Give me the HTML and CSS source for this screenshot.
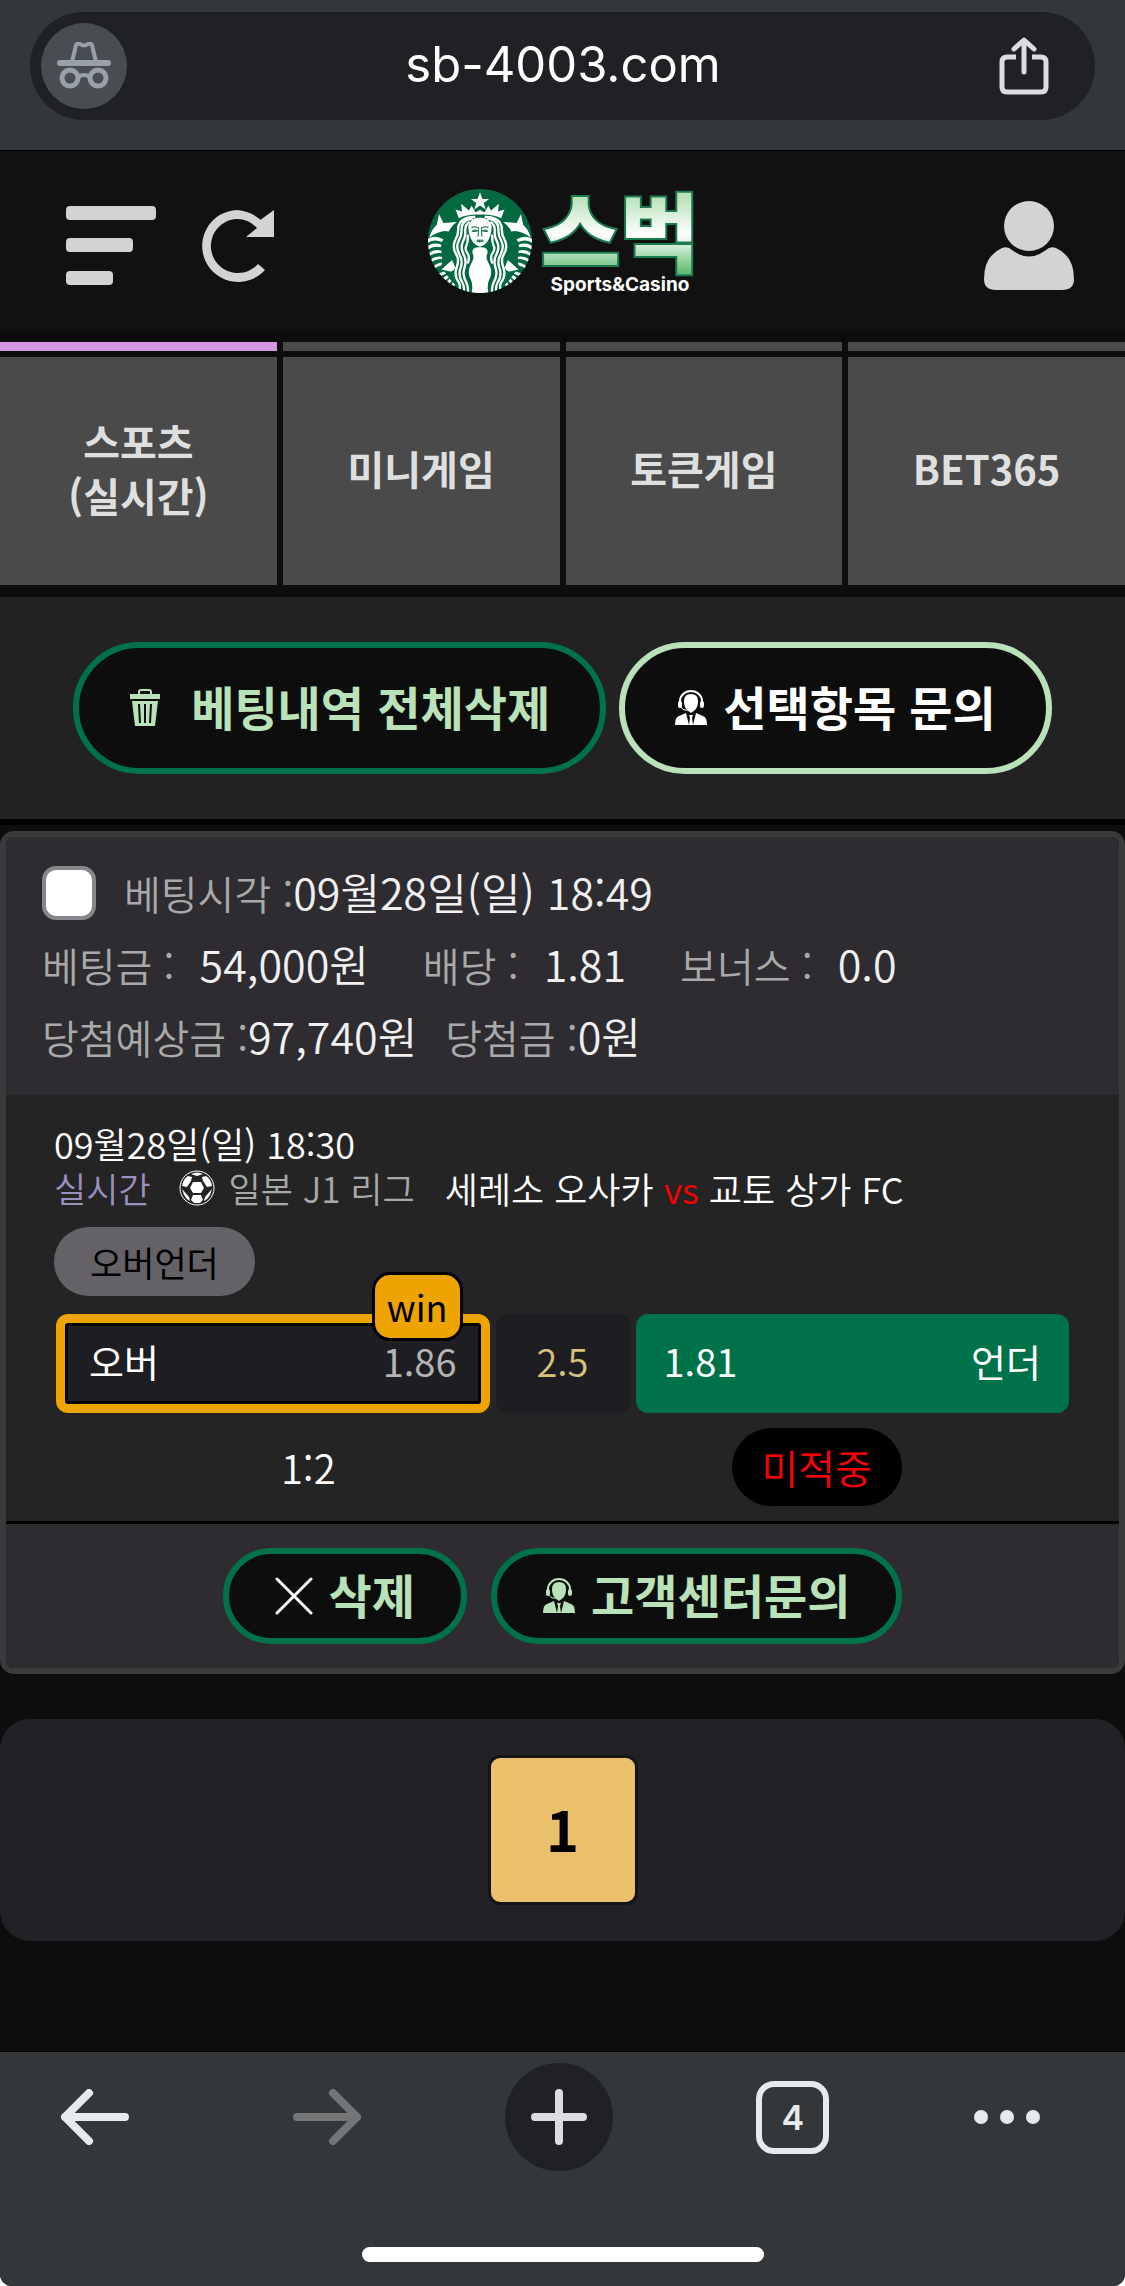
FILE: index.html
```html
<!DOCTYPE html>
<html lang="ko">

<head>
    <meta charset="UTF-8">
    <meta name="viewport" content="width=device-width, initial-scale=1.0">
    <title>스벅 - 베팅내역</title>
    <link rel="stylesheet" href="styles.css">
</head>

<body>
    <!-- shared icons -->
    <svg class="sprite" aria-hidden="true">
        <symbol id="icon-agent" viewBox="0 0 32 36">
            <path d="M5 15v-4a11 10 0 0 1 22 0v4" fill="none" stroke="currentColor" stroke-width="2" />
            <rect x="3" y="11" width="4" height="7" rx="2" />
            <rect x="25" y="11" width="4" height="7" rx="2" />
            <path d="M9 11q0-7 7-7t7 7q0 6-3 9l-4 3-4-3q-3-3-3-9z" />
            <path d="M6 17q2 4 8 3" fill="none" stroke="currentColor" stroke-width="1" />
            <path d="M0 35q0-8 4-9l7-3 3 12zM32 35q0-8-4-9l-7-3-3 12zM14 25h4l-1 3 1 7h-4l1-7z" />
        </symbol>
    </svg>

    <div class="screen">
        <div class="browser-top">
            <div class="address-bar">
                <span class="incognito">
                    <svg viewBox="0 0 54 48" width="54" height="48">
                        <path d="M15 20L19 3Q20 1 23 2Q27 5 31 2Q34 1 35 3L39 20" fill="none" stroke="currentColor" stroke-width="4" />
                        <rect x="0" y="18" width="54" height="6" rx="3" />
                        <circle cx="13" cy="36" r="8" fill="none" stroke="currentColor" stroke-width="5" />
                        <circle cx="41" cy="36" r="8" fill="none" stroke="currentColor" stroke-width="5" />
                        <path d="M21 35Q27 31 33 35" fill="none" stroke="currentColor" stroke-width="4" />
                    </svg>
                </span>
                <input class="url" type="text" value="sb-4003.com" aria-label="주소">
                <button class="icon-button share" aria-label="공유">
                    <svg viewBox="0 0 50 58" width="50" height="58" class="stroke-icon thin">
                        <path d="M17 20H8Q3 20 3 25V50Q3 55 8 55H42Q47 55 47 50V25Q47 20 42 20H33" stroke-linecap="butt" />
                        <path d="M25 35V4M15 12L25 3L35 12" />
                    </svg>
                </button>
            </div>
        </div>

        <header class="site-header">
            <div class="header-left">
                <button class="icon-button" aria-label="메뉴">
                    <svg viewBox="0 0 90 80" width="90" height="80">
                        <rect x="0" y="0" width="90" height="14" rx="4" />
                        <rect x="0" y="32" width="67" height="14" rx="4" />
                        <rect x="0" y="65" width="47" height="14" rx="4" />
                    </svg>
                </button>
                <button class="icon-button" aria-label="새로고침">
                    <svg viewBox="0 0 74 72" width="74" height="72">
                        <path d="M55 13L73 0V27H45L56 18Q48 9 36 9A27 27 0 1 0 57 54L64 60A36 36 0 1 1 36 0Q50 1 61 11Z" />
                    </svg>
                </button>
            </div>

            <a class="logo" href="#" aria-label="스벅 Sports&amp;Casino">
                <svg class="logo-mark" viewBox="0 0 310 310" width="104" height="104">
                    <clipPath id="logo-clip"><circle cx="155" cy="155" r="155" /></clipPath>
                    <circle cx="155" cy="155" r="155" fill="#04693e" />
                    <g clip-path="url(#logo-clip)">
                        <path d="M155 10L162 30H182L166 42L172 61L155 49L138 61L144 42L128 30H148Z" fill="#fff" />
                        <g id="siren-half">
                            <path d="M155 62L142 70L130 50L122 64L99 44L101 67L82 61L92 87Q118 74 155 76Z" fill="#fff" />
                            <path d="M155 86Q127 84 120 112L122 132Q132 168 155 172Z" fill="#fff" />
                            <path d="M33 75L46 101L86 98Q68 110 62 127Q38 120 4 145Q10 120 26 107Z" fill="#fff" />
                            <path d="M0 148Q22 136 46 150L42 158Q18 148 0 160ZM0 169Q20 158 40 166L38 174Q18 168 0 180ZM4 190Q20 178 40 184L40 191Q20 188 4 200ZM8 211Q22 199 42 202L42 209Q24 208 8 220ZM15 232Q26 220 42 219L40 227Q26 230 16 242Z" fill="#fff" />
                            <path d="M40 240L72 212L82 236Q72 246 66 246L44 241ZM24 254L48 246L54 252L30 264ZM36 272L56 257L62 263L44 280ZM48 288L64 267L70 274L56 292ZM64 298L74 278L80 285L74 304Z" fill="#fff" />
                            <g fill="none" stroke="#fff" stroke-width="7">
                                <path d="M141 83Q96 82 90 115Q92 135 80 155Q72 175 84 195Q94 210 86 232Q76 258 92 278Q98 290 92 306" />
                                <path d="M134 88Q102 90 100 118Q102 136 91 156Q82 174 94 196Q104 213 98 232Q88 256 102 278Q110 292 106 308" />
                                <path d="M124 98Q110 106 111 126Q113 142 103 160Q96 176 106 195Q116 212 109 234Q101 254 113 276Q122 294 118 310" />
                                <path d="M118 136Q120 156 115 167Q108 180 118 192Q126 204 118 222" />
                            </g>
                            <path d="M156 174Q132 172 132 190Q140 204 130 220Q116 242 125 264Q136 284 130 310H156Z" fill="#fff" />
                            <path d="M130 116Q138 109 148 116M132 125Q140 119 147 125Q140 129 132 125M150 114V138L148 142M145 154Q150 150 156 153V157Q150 159 145 154" fill="none" stroke="#04693e" stroke-width="3" />
                        </g>
                        <use href="#siren-half" transform="translate(310 0) scale(-1 1)" />
                    </g>
                </svg>
                <svg class="logo-text" viewBox="0 0 164 104" width="164" height="104">
                    <defs>
                        <linearGradient id="logo-fill" x1="0" y1="0" x2="0" y2="1">
                            <stop offset="25%" stop-color="#b9e2b8" />
                            <stop offset="55%" stop-color="#ffffff" />
                            <stop offset="85%" stop-color="#62bd72" />
                        </linearGradient>
                    </defs>
                    <text class="logo-name" x="82" y="77" text-anchor="middle">스벅</text>
                    <text class="logo-sub" x="82" y="102" text-anchor="middle">Sports&amp;Casino</text>
                </svg>
            </a>

            <button class="icon-button" aria-label="내 정보">
                <svg viewBox="0 0 90 90" width="90" height="90">
                    <circle cx="45" cy="25" r="25" />
                    <path d="M18 47Q24 45 28 49Q45 62 62 49Q66 45 72 47Q90 55 90 78Q90 89 78 89H12Q0 89 0 78Q0 55 18 47Z" />
                </svg>
            </button>
        </header>

        <nav class="tabs">
            <a class="tab active" href="#"><span>스포츠<br>(실시간)</span></a>
            <a class="tab" href="#"><span>미니게임</span></a>
            <a class="tab" href="#"><span>토큰게임</span></a>
            <a class="tab" href="#"><span>BET365</span></a>
        </nav>

        <div class="actions">
            <button class="pill-button large wide-gap">
                <svg viewBox="0 0 32 38" width="32" height="38">
                    <path d="M10 5V3Q10 1 12 1H20Q22 1 22 3V5" fill="none" stroke="currentColor" stroke-width="2" />
                    <path d="M1 5H31V10H1ZM3 12H29L26 37H6Z" />
                    <path d="M10 15L11 34M16 15V34M22 15L21 34" stroke="#0d0d0d" stroke-width="2" />
                </svg>
                <span>베팅내역 전체삭제</span>
            </button>
            <button class="pill-button large light">
                <svg width="32" height="36"><use href="#icon-agent" /></svg>
                <span>선택항목 문의</span>
            </button>
        </div>

        <main>
            <section class="bet-card">
                <div class="bet-info">
                    <div class="info-row">
                        <input type="checkbox" id="bet1" class="bet-check">
                        <label for="bet1">베팅시각 :<b>09월28일(일) 18:49</b></label>
                    </div>
                    <div class="info-row spaced">
                        <span>베팅금 : <b>54,000원</b></span>
                        <span>배당 : <b>1.81</b></span>
                        <span>보너스 : <b>0.0</b></span>
                    </div>
                    <div class="info-row">
                        <span>당첨예상금 :<b>97,740원</b></span>
                        <span>당첨금 :<b>0원</b></span>
                    </div>
                </div>

                <div class="match">
                    <div class="match-date">09월28일(일) 18:30</div>
                    <div class="match-title">
                        <span class="live">실시간</span>
                        <svg viewBox="0 0 36 36" width="36" height="36">
                            <circle cx="18" cy="18" r="17" fill="#242424" stroke="#fff" stroke-width="1" />
                            <g fill="#fff">
                                <path d="M14 12H22L25 18L22 23H14L11 18Z" />
                                <path d="M12 11L8 17L3 16Q4 9 9 6L13 7ZM24 11L28 17L33 16Q32 9 27 6L23 7Z" />
                                <path d="M14 25H22L24 30L21 33H15L12 30Z" />
                                <path d="M3 19L5 25Q7 29 11 31L10 27ZM33 19L31 25Q29 29 25 31L26 27ZM12 4Q18 1 24 4L18 6Z" />
                            </g>
                        </svg>
                        <span class="league">일본 J1 리그</span>
                        <span class="teams">세레소 오사카 <em>vs</em> 교토 상가 FC</span>
                    </div>
                    <span class="market">오버언더</span>

                    <div class="odds">
                        <button class="odd win">
                            <span>오버</span><span class="rate">1.86</span>
                            <span class="win-badge">win</span>
                        </button>
                        <div class="line">2.5</div>
                        <button class="odd picked">
                            <span>1.81</span><span>언더</span>
                        </button>
                    </div>

                    <div class="result">
                        <span>1:2</span>
                        <span class="miss">미적중</span>
                    </div>
                </div>

                <div class="bet-footer">
                    <button class="pill-button">
                        <svg viewBox="0 0 38 38" width="38" height="38">
                            <path d="M2 2L36 36M36 2L2 36" stroke="#fff" stroke-width="3" stroke-linecap="round" />
                        </svg>
                        <span>삭제</span>
                    </button>
                    <button class="pill-button">
                        <svg width="32" height="36"><use href="#icon-agent" /></svg>
                        <span>고객센터문의</span>
                    </button>
                </div>
            </section>

            <div class="pagination">
                <button class="page current">1</button>
            </div>
        </main>

        <footer class="browser-bottom">
            <div class="toolbar">
                <button class="icon-button" aria-label="뒤로">
                    <svg viewBox="0 0 68 56" width="68" height="56" class="stroke-icon"><path d="M64 28H4M28 4L4 28L28 52" /></svg>
                </button>
                <button class="icon-button forward" aria-label="앞으로" disabled>
                    <svg viewBox="0 0 68 56" width="68" height="56" class="stroke-icon"><path d="M4 28H64M40 4L64 28L40 52" /></svg>
                </button>
                <button class="icon-button new-tab" aria-label="새 탭">
                    <svg viewBox="0 0 56 56" width="56" height="56" class="stroke-icon"><path d="M28 4V52M4 28H52" /></svg>
                </button>
                <button class="icon-button tab-count" aria-label="탭 4개">4</button>
                <button class="icon-button" aria-label="더보기">
                    <svg viewBox="0 0 68 16" width="68" height="16">
                        <circle cx="8" cy="8" r="7" />
                        <circle cx="34" cy="8" r="7" />
                        <circle cx="60" cy="8" r="7" />
                    </svg>
                </button>
            </div>
            <div class="home-indicator"></div>
        </footer>
    </div>
</body>

</html>
```

FILE: styles.css
```css
/* Global styles */
* {
    box-sizing: border-box;
    margin: 0;
    padding: 0;
}

html {
    background-color: white;
}

body {
    font-family: "Noto Sans CJK KR", sans-serif;
    font-size: 40px;
    font-weight: 350;
    color: white;
}

button,
input {
    font-family: inherit;
    font-size: inherit;
    font-weight: inherit;
    color: inherit;
}

button {
    cursor: pointer;
}

a {
    color: inherit;
    text-decoration: none;
}

svg {
    display: block;
    flex: none;
    fill: currentColor;
}

.sprite {
    position: absolute;
    width: 0;
    height: 0;
}

.screen {
    display: flex;
    flex-direction: column;
    min-height: 100vh;
    background-color: #0d0d0d;
    border-radius: 0 0 12px 12px;
    overflow: hidden;
}

.icon-button {
    display: flex;
    align-items: center;
    justify-content: center;
    background: none;
    border: none;
}

.stroke-icon {
    fill: none;
    stroke: currentColor;
    stroke-width: 8px;
    stroke-linecap: round;
    stroke-linejoin: round;
}

.stroke-icon.thin {
    stroke-width: 5px;
}

/* Browser address bar */
.browser-top {
    padding: 12px 30px 30px;
    background-color: #33373a;
    border-bottom: 1px solid black;
}

.address-bar {
    display: flex;
    align-items: center;
    justify-content: space-between;
    height: 108px;
    padding: 0 46px 0 11px;
    background-color: #202125;
    border-radius: 54px;
}

.incognito {
    display: flex;
    align-items: center;
    justify-content: center;
    width: 86px;
    height: 86px;
    border-radius: 50%;
    background-color: #474d50;
    color: #9aa0a9;
}

.url {
    flex: 1;
    min-width: 0;
    padding-bottom: 4px;
    background: none;
    border: none;
    outline: none;
    text-align: center;
    font-family: Inter, "Liberation Sans", sans-serif;
    font-size: 49px;
    font-weight: 400;
}

.share {
    color: #dcdde2;
}

/* Site header */
.site-header {
    display: flex;
    align-items: center;
    justify-content: space-between;
    height: 179px;
    padding: 10px 51px 0 66px;
    background-color: #111111;
    color: #d3d3d3;
}

.header-left {
    display: flex;
    align-items: center;
    gap: 45px;
}

.logo {
    display: flex;
    align-items: center;
    margin: 0 130px 10px 0;
}

.logo-text {
    margin-left: 6px;
    overflow: visible;
}

.logo-name {
    font-size: 86px;
    font-weight: 900;
    fill: url(#logo-fill);
    stroke: #1b7a50;
    stroke-width: 4px;
    paint-order: stroke;
}

.logo-sub {
    font-family: Inter, sans-serif;
    font-size: 19px;
    font-weight: 700;
    fill: white;
}

/* Category tabs */
.tabs {
    display: grid;
    grid-template-columns: repeat(4, 1fr);
    gap: 6px;
    padding: 12px 0;
}

.tab {
    display: flex;
    flex-direction: column;
    gap: 6px;
    color: #dfdfdf;
    font-weight: 700;
    line-height: 54px;
    text-align: center;
}

.tab::before {
    content: "";
    height: 9px;
    background-color: #4a4a4a;
}

.tab.active::before {
    background-color: #d698e0;
}

.tab span {
    display: flex;
    flex-direction: column;
    align-items: center;
    justify-content: center;
    height: 228px;
    padding-bottom: 6px;
    background-color: #4a4a4a;
}

/* Buttons */
.actions {
    display: flex;
    justify-content: center;
    gap: 13px;
    padding: 45px 0;
    margin-bottom: 6px;
    background-color: #222222;
    border-bottom: 6px solid black;
}

.pill-button {
    display: flex;
    align-items: center;
    gap: 16px;
    height: 96px;
    padding: 0 46px;
    background-color: #0d0d0d;
    border: 6px solid #00724a;
    border-radius: 66px;
    color: #b9e2b8;
    font-size: 47px;
    font-weight: 700;
}

.pill-button span {
    margin-bottom: 6px;
}

.pill-button.large {
    height: 132px;
    padding: 0 50px;
}

.pill-button.wide-gap {
    gap: 30px;
}

.pill-button.light {
    border-color: #b9e2b8;
    color: white;
}

/* Bet card */
.bet-card {
    border: 6px solid #3a3a3b;
    border-radius: 14px;
    overflow: hidden;
}

.bet-info {
    padding: 20px 36px 22px;
    background-color: #2e2c31;
    color: #a9a9a9;
}

.info-row {
    display: flex;
    align-items: center;
    gap: 28px;
    height: 72px;
}

.info-row span,
.info-row label {
    margin-bottom: 4px;
}

.info-row.spaced {
    gap: 54px;
}

.info-row.spaced b {
    margin-left: 14px;
}

.info-row b {
    color: #f0f0f0;
    font-size: 43px;
    font-weight: 350;
}

.bet-check {
    appearance: none;
    width: 54px;
    height: 54px;
    background-color: white;
    border: 4px solid #87868c;
    border-radius: 14px;
}

.match {
    padding: 24px 48px 15px;
    background-color: #242424;
    border-bottom: 3px solid black;
}

.match-date {
    font-size: 36px;
    line-height: 48px;
}

.match-title {
    display: flex;
    align-items: center;
    font-size: 35px;
    line-height: 42px;
}

.live {
    margin-right: 28px;
    color: #9a90c0;
}

.league {
    margin: 0 30px 0 14px;
    color: #a9a9a9;
}

.teams {
    font-size: 36px;
}

.teams em {
    color: red;
    font-style: normal;
}

.market {
    display: block;
    width: fit-content;
    margin: 18px 0;
    padding: 0 36px;
    background-color: #646267;
    border-radius: 35px;
    color: black;
    font-size: 35px;
    font-weight: 400;
    line-height: 69px;
}

.odds {
    display: grid;
    grid-template-columns: 1fr 134px 1fr;
    gap: 6px;
    padding: 0 2px;
    font-size: 38px;
}

.odd,
.line {
    display: flex;
    align-items: center;
    justify-content: center;
    height: 99px;
    padding: 0 28px 6px;
    border-radius: 12px;
}

.odd {
    position: relative;
    justify-content: space-between;
    border: none;
    font-weight: 400;
}

.odd.win {
    padding: 0 24px 6px;
    background-color: #1e1d21;
    border: 9px solid #eda400;
    box-shadow: inset 0 0 0 3px black;
}

.odd.picked {
    background-color: #00724a;
}

.rate {
    color: #b4b4b4;
}

.win-badge {
    position: absolute;
    top: -51px;
    right: 18px;
    padding: 0 12px;
    background-color: #eda400;
    border: 3px solid black;
    border-radius: 18px;
    color: black;
    font-size: 36px;
    line-height: 63px;
}

.line {
    background-color: #1e1d21;
    color: #d8c27c;
}

.result {
    display: grid;
    grid-template-columns: 1fr 1fr;
    align-items: center;
    justify-items: center;
    padding-top: 15px;
}

.miss {
    padding: 0 30px;
    background-color: black;
    border-radius: 39px;
    color: red;
    line-height: 78px;
}

.bet-footer {
    display: flex;
    justify-content: center;
    gap: 24px;
    padding: 24px 0;
    background-color: #2e2c31;
}

/* Pagination */
.pagination {
    display: flex;
    justify-content: center;
    margin: 45px 0;
    padding: 36px 0;
    background-color: #222126;
    border-radius: 30px;
}

.page {
    width: 150px;
    height: 150px;
    padding-bottom: 6px;
    background-color: #ebc06c;
    border: 3px solid #151519;
    border-radius: 12px;
    color: black;
    font-size: 56px;
    font-weight: 700;
}

/* Browser toolbar */
.browser-bottom {
    margin-top: auto;
    padding-bottom: 24px;
    background-color: #33373a;
    border-top: 1px solid black;
    color: #e6eaed;
}

.toolbar {
    display: flex;
    align-items: center;
    justify-content: space-between;
    padding: 11px 84px 0 61px;
}

.forward {
    margin-left: 20px;
    color: #747576;
}

.new-tab {
    width: 108px;
    height: 108px;
    background-color: #202125;
    border-radius: 50%;
    color: #dcdde2;
}

.tab-count {
    width: 73px;
    height: 73px;
    border: 6px solid #e6eaed;
    border-radius: 18px;
    font-family: Inter, sans-serif;
    font-size: 34px;
    font-weight: 600;
}

.home-indicator {
    width: 402px;
    height: 15px;
    margin: 76px auto 0;
    background-color: white;
    border-radius: 8px;
}
```
